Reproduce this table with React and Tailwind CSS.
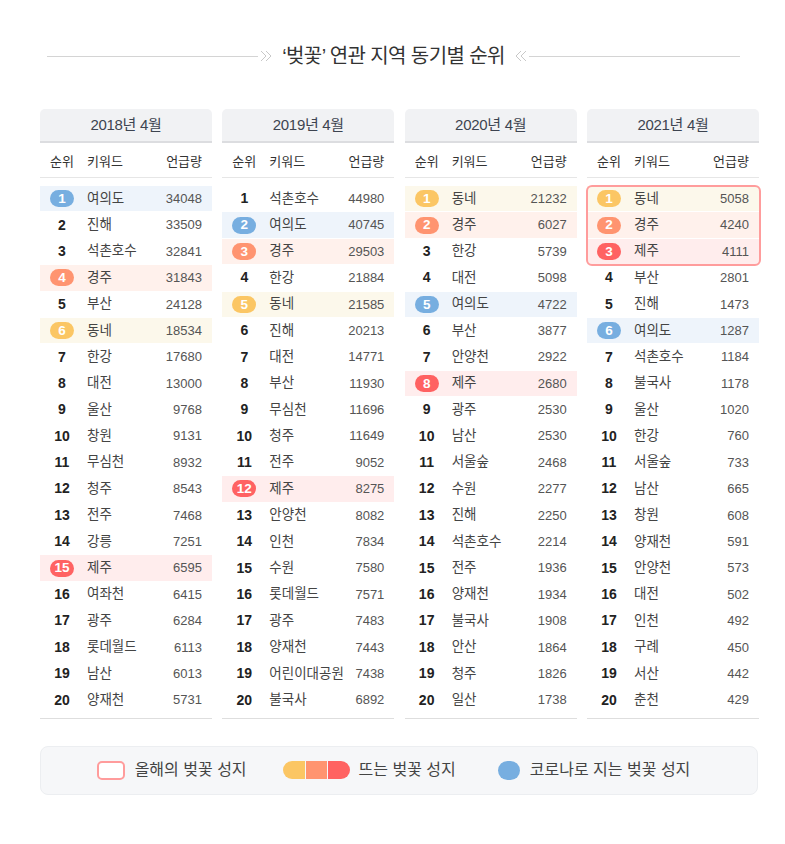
import React from 'react'

const FONT = { fontFamily: '"Liberation Sans", "Noto Sans CJK KR", sans-serif' }

const TONES = {
    blue: { badge: 'bg-[#77aee0]', row: 'bg-[#eef4fb]' },
    orange: { badge: 'bg-[#ff9470]', row: 'bg-[#fff1ec]' },
    yellow: { badge: 'bg-[#fbc664]', row: 'bg-[#fcf8eb]' },
    red: { badge: 'bg-[#ff6262]', row: 'bg-[#ffeded]' },
}

const years = [
    {
        title: '2018년 4월',
        rows: [
            ['여의도', '34048', 'blue'], ['진해', '33509'], ['석촌호수', '32841'], ['경주', '31843', 'orange'],
            ['부산', '24128'], ['동네', '18534', 'yellow'], ['한강', '17680'], ['대전', '13000'],
            ['울산', '9768'], ['창원', '9131'], ['무심천', '8932'], ['청주', '8543'],
            ['전주', '7468'], ['강릉', '7251'], ['제주', '6595', 'red'], ['여좌천', '6415'],
            ['광주', '6284'], ['롯데월드', '6113'], ['남산', '6013'], ['양재천', '5731'],
        ],
    },
    {
        title: '2019년 4월',
        rows: [
            ['석촌호수', '44980'], ['여의도', '40745', 'blue'], ['경주', '29503', 'orange'], ['한강', '21884'],
            ['동네', '21585', 'yellow'], ['진해', '20213'], ['대전', '14771'], ['부산', '11930'],
            ['무심천', '11696'], ['청주', '11649'], ['전주', '9052'], ['제주', '8275', 'red'],
            ['안양천', '8082'], ['인천', '7834'], ['수원', '7580'], ['롯데월드', '7571'],
            ['광주', '7483'], ['양재천', '7443'], ['어린이대공원', '7438'], ['불국사', '6892'],
        ],
    },
    {
        title: '2020년 4월',
        rows: [
            ['동네', '21232', 'yellow'], ['경주', '6027', 'orange'], ['한강', '5739'], ['대전', '5098'],
            ['여의도', '4722', 'blue'], ['부산', '3877'], ['안양천', '2922'], ['제주', '2680', 'red'],
            ['광주', '2530'], ['남산', '2530'], ['서울숲', '2468'], ['수원', '2277'],
            ['진해', '2250'], ['석촌호수', '2214'], ['전주', '1936'], ['양재천', '1934'],
            ['불국사', '1908'], ['안산', '1864'], ['청주', '1826'], ['일산', '1738'],
        ],
    },
    {
        title: '2021년 4월',
        highlightTop: true,
        rows: [
            ['동네', '5058', 'yellow'], ['경주', '4240', 'orange'], ['제주', '4111', 'red'], ['부산', '2801'],
            ['진해', '1473'], ['여의도', '1287', 'blue'], ['석촌호수', '1184'], ['불국사', '1178'],
            ['울산', '1020'], ['한강', '760'], ['서울숲', '733'], ['남산', '665'],
            ['창원', '608'], ['양재천', '591'], ['안양천', '573'], ['대전', '502'],
            ['인천', '492'], ['구례', '450'], ['서산', '442'], ['춘천', '429'],
        ],
    },
]

function Row({ rank, name, count, tone }) {
    const t = tone ? TONES[tone] : null
    return (
        <div className={`flex items-center h-[25.4px] mb-[1px] ${t ? t.row : ''}`}>
            <div className="w-[44px] flex justify-center">
                {t ? (
                    <span className={`${t.badge} h-[17px] min-w-[24px] px-[3px] rounded-full flex items-center justify-center text-white text-[13.5px] font-bold leading-none`}>
                        {rank}
                    </span>
                ) : (
                    <span className="text-[14px] font-bold text-[#222]">{rank}</span>
                )}
            </div>
            <div className="ml-[3px] flex-1 text-[13.5px] text-[#444] whitespace-nowrap">{name}</div>
            <div className="pr-[10px] text-[13px] text-[#555]">{count}</div>
        </div>
    )
}

function YearColumn({ year }) {
    return (
        <div>
            <div className="h-[34px] bg-[#f1f2f4] rounded-t-[5px] border-b-2 border-[#dcdde0] flex items-center justify-center text-[15px] text-[#3d4450] tracking-[-0.3px]">
                {year.title}
            </div>
            <div className="h-[35px] pt-[3px] flex items-center border-b border-[#e6e6e6] text-[13px] text-[#333]">
                <div className="w-[44px] text-center">순위</div>
                <div className="ml-[3px] flex-1">키워드</div>
                <div className="pr-[10px]">언급량</div>
            </div>
            <div className="pt-[8px] relative">
                {year.highlightTop && (
                    <div className="absolute left-[-1px] right-[-2px] top-[7px] h-[81px] border-2 border-[#ff9c9c] rounded-[6px] pointer-events-none" />
                )}
                {year.rows.map((r, i) => (
                    <Row key={i} rank={i + 1} name={r[0]} count={r[1]} tone={r[2]} />
                ))}
            </div>
            <div className="mt-[5px] border-t border-[#dedede]" />
        </div>
    )
}

function Chevrons({ dir }) {
    return (
        <svg width="13" height="12" viewBox="0 0 13 12" fill="none" stroke="#c8c8c8" strokeWidth="1">
            {dir === 'right' ? (
                <>
                    <path d="M1 1l5 5-5 5" />
                    <path d="M6 1l5 5-5 5" />
                </>
            ) : (
                <>
                    <path d="M7 1L2 6l5 5" />
                    <path d="M12 1L7 6l5 5" />
                </>
            )}
        </svg>
    )
}

export default function App() {
    return (
        <div className="w-[785px] h-[844px] bg-white" style={FONT}>
            <div className="pt-[42px] pl-[47px] pr-[45px] flex items-center">
                <div className="flex-1 h-px bg-[#d4d4d4]" />
                <div className="mx-[2px]"><Chevrons dir="right" /></div>
                <div className="mx-[7px] text-[20px] text-[#333] tracking-[-0.6px] leading-[28px]">‘벚꽃’ 연관 지역 동기별 순위</div>
                <div className="mx-[2px]"><Chevrons dir="left" /></div>
                <div className="flex-1 h-px bg-[#d4d4d4]" />
            </div>

            <div className="ml-[40px] w-[719px] mt-[39px] grid grid-cols-4 gap-x-[10.3px]">
                {years.map((y) => (
                    <YearColumn key={y.title} year={y} />
                ))}
            </div>

            <div className="ml-[40px] w-[718px] mt-[27px] h-[49px] pr-[11px] bg-[#f6f7f9] border border-[#eceef1] rounded-[8px] flex items-center justify-center text-[16px] text-[#444]">
                <div className="flex items-center gap-[10px]">
                    <span className="w-[28px] h-[19px] rounded-[5px] border-2 border-[#ff9c9c] bg-white" />
                    <span>올해의 벚꽃 성지</span>
                </div>
                <div className="flex items-center gap-[9px] ml-[36px]">
                    <span className="flex h-[18px] rounded-full overflow-hidden gap-[1px]">
                        <span className="w-[22px] bg-[#fbc664]" />
                        <span className="w-[21px] bg-[#ff9470]" />
                        <span className="w-[22px] bg-[#ff6262]" />
                    </span>
                    <span>뜨는 벚꽃 성지</span>
                </div>
                <div className="flex items-center gap-[10px] ml-[42px]">
                    <span className="w-[22px] h-[19px] rounded-full bg-[#77aee0]" />
                    <span>코로나로 지는 벚꽃 성지</span>
                </div>
            </div>
        </div>
    )
}
